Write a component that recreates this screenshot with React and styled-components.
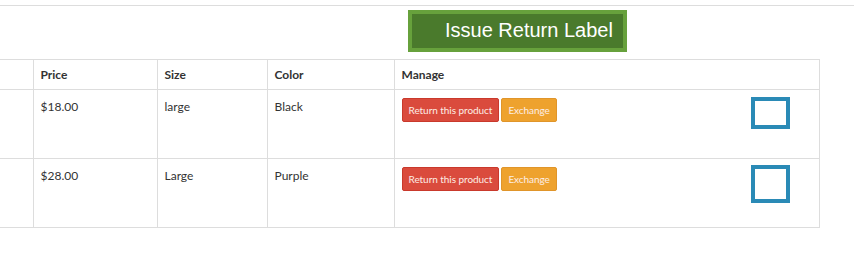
import React from 'react';
import styled, {createGlobalStyle} from 'styled-components';

const GlobalStyle = createGlobalStyle`
  body {
    margin: 0;
    background: #fff;
    font-family: Lato, "Open Sans", sans-serif;
    color: #333;
  }
`;

const Page = styled.div`
  width: 854px;
  height: 274px;
  overflow: hidden;
`;

const TopRule = styled.div`
  margin-top: 5px;
  border-top: 1px solid #ddd;
`;

const Toolbar = styled.div`
  display: flex;
  padding: 4px 0 7px 408px;
`;

const IssueButton = styled.button`
  box-sizing: border-box;
  width: 219px;
  height: 42px;
  border: 4px solid #67a13c;
  background: #4a7a2c;
  color: #fff;
  font-family: "Liberation Sans", Arial, sans-serif;
  font-size: 20px;
  text-align: left;
  padding: 0 0 1px 33px;
  cursor: pointer;
`;

const Table = styled.table`
  border-collapse: collapse;
  table-layout: fixed;
  width: 820px;
  font-size: 12px;
`;

const Th = styled.th`
  height: 30px;
  box-sizing: border-box;
  border: 1px solid #ddd;
  border-left: ${p => (p.$first ? 'none' : '1px solid #ddd')};
  text-align: left;
  vertical-align: middle;
  padding: 0 7px 1px;
  font-weight: 700;
  color: #333;
`;

const Td = styled.td`
  height: 69px;
  box-sizing: border-box;
  border: 1px solid #ddd;
  border-left: ${p => (p.$first ? 'none' : '1px solid #ddd')};
  vertical-align: top;
  padding: 9px 7px 0;
  line-height: 16px;
  color: #333;
`;

const Manage = styled.div`
  display: flex;
  align-items: flex-start;
  margin-top: -1px;
`;

const SmallButton = styled.button`
  box-sizing: border-box;
  height: 24px;
  padding: 0 6px;
  margin-right: 2px;
  border: 1px solid ${p => (p.$tone === 'danger' ? '#c9392c' : '#e0952a')};
  border-radius: 2px;
  background: ${p => (p.$tone === 'danger' ? '#da4b3d' : '#eea22e')};
  color: #fdeee6;
  font-family: Lato, "Open Sans", sans-serif;
  font-size: 10px;
  letter-spacing: -0.05px;
  cursor: pointer;
`;

const Check = styled.div`
  box-sizing: border-box;
  width: 39px;
  height: ${p => p.$h}px;
  margin: ${p => p.$top}px 22px 0 auto;
  border: 4px solid #2a8ab6;
  background: #fff;
`;

const rows = [
  {price: '$18.00', size: 'large', color: 'Black', box: 32, top: -1},
  {price: '$28.00', size: 'Large', color: 'Purple', box: 38, top: -2}
];

export default function App() {
  return (
    <Page>
      <GlobalStyle/>
      <TopRule/>
      <Toolbar>
        <IssueButton>Issue Return Label</IssueButton>
      </Toolbar>
      <Table>
        <colgroup>
          <col style={{width: 33}}/>
          <col style={{width: 124}}/>
          <col style={{width: 110}}/>
          <col style={{width: 127}}/>
          <col/>
        </colgroup>
        <thead>
          <tr>
            <Th $first></Th>
            <Th>Price</Th>
            <Th>Size</Th>
            <Th>Color</Th>
            <Th>Manage</Th>
          </tr>
        </thead>
        <tbody>
          {rows.map(r => (
            <tr key={r.price}>
              <Td $first></Td>
              <Td>{r.price}</Td>
              <Td>{r.size}</Td>
              <Td>{r.color}</Td>
              <Td>
                <Manage>
                  <SmallButton $tone="danger">Return this product</SmallButton>
                  <SmallButton $tone="warning">Exchange</SmallButton>
                  <Check $h={r.box} $top={r.top}/>
                </Manage>
              </Td>
            </tr>
          ))}
        </tbody>
      </Table>
    </Page>
  );
}
